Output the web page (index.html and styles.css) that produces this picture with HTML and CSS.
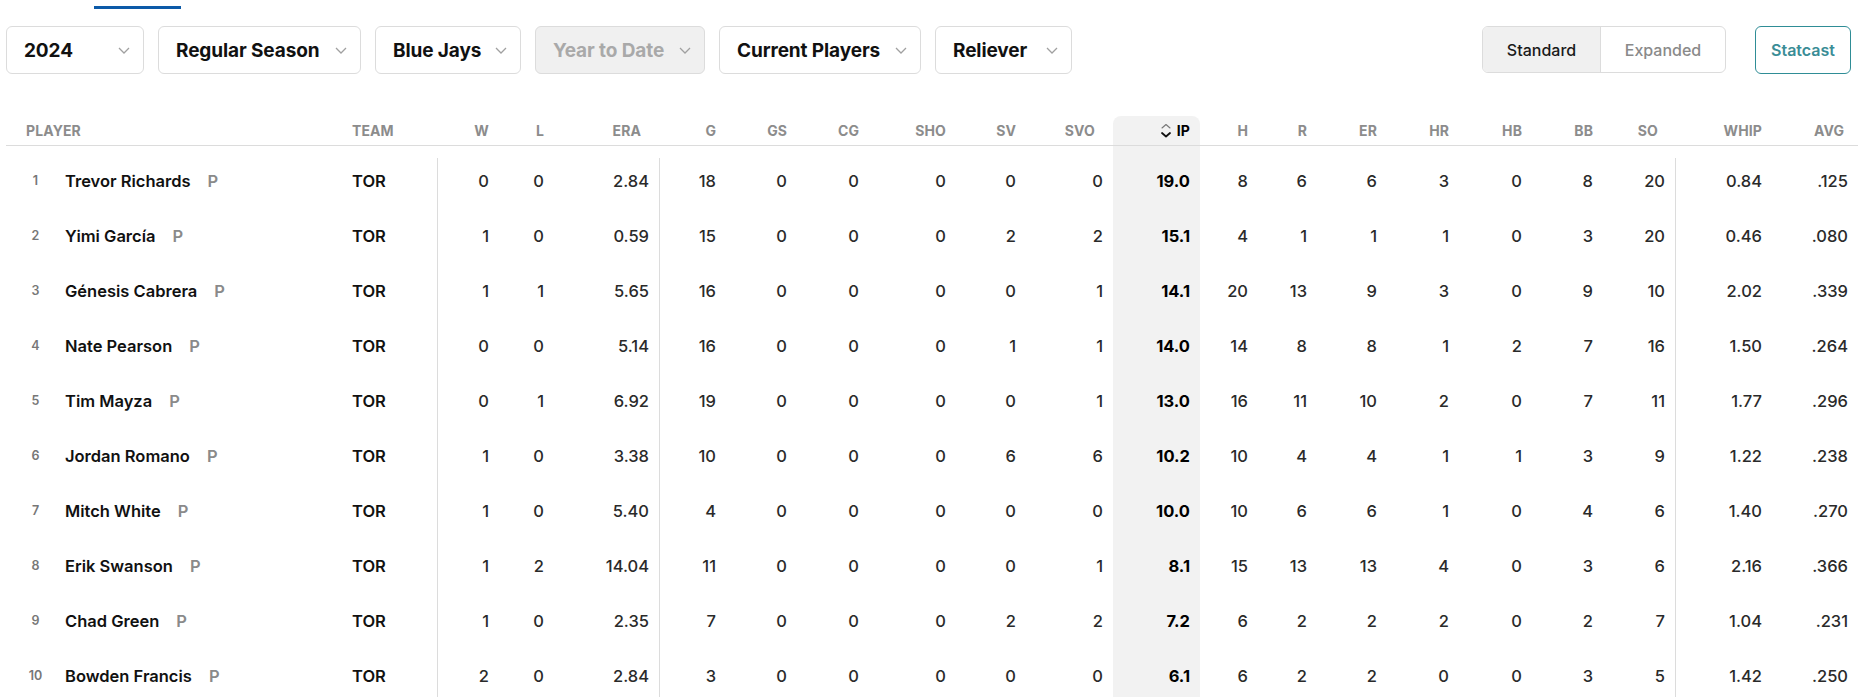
FILE: index.html
```html
<!DOCTYPE html>
<html>
<head>
<meta charset="utf-8">
<link rel="stylesheet" href="styles.css">
</head>
<body>
<div class="page">
  <div class="tabs"><div class="tab-underline"></div></div>
  <div class="filters">
    <div class="dropdowns">
      <div class="dd dd-year"><span>2024</span><svg class="chev" viewBox="0 0 12 7"><path d="M1 1 L6 6 L11 1"/></svg></div>
      <div class="dd dd-season"><span>Regular Season</span><svg class="chev" viewBox="0 0 12 7"><path d="M1 1 L6 6 L11 1"/></svg></div>
      <div class="dd dd-team"><span>Blue Jays</span><svg class="chev" viewBox="0 0 12 7"><path d="M1 1 L6 6 L11 1"/></svg></div>
      <div class="dd dd-range disabled"><span>Year to Date</span><svg class="chev" viewBox="0 0 12 7"><path d="M1 1 L6 6 L11 1"/></svg></div>
      <div class="dd dd-players"><span>Current Players</span><svg class="chev" viewBox="0 0 12 7"><path d="M1 1 L6 6 L11 1"/></svg></div>
      <div class="dd dd-role"><span>Reliever</span><svg class="chev" viewBox="0 0 12 7"><path d="M1 1 L6 6 L11 1"/></svg></div>
    </div>
    <div class="views">
      <div class="toggle">
        <div class="seg seg-standard active">Standard</div>
        <div class="seg seg-expanded">Expanded</div>
      </div>
      <div class="statcast">Statcast</div>
    </div>
  </div>

  <div class="table">
    <div class="thead grid">
      <div class="th th-player">Player</div>
      <div class="th th-team">Team</div>
      <div class="th">W</div>
      <div class="th">L</div>
      <div class="th pr18">ERA</div>
      <div class="th">G</div>
      <div class="th">GS</div>
      <div class="th">CG</div>
      <div class="th">SHO</div>
      <div class="th">SV</div>
      <div class="th pr18">SVO</div>
      <div class="th th-sorted"><svg class="sort" viewBox="0 0 12 15"><path class="up" d="M2 5 L6 1.5 L10 5"/><path class="down" d="M2 10 L6 13.5 L10 10"/></svg><span>IP</span></div>
      <div class="th">H</div>
      <div class="th">R</div>
      <div class="th">ER</div>
      <div class="th">HR</div>
      <div class="th">HB</div>
      <div class="th">BB</div>
      <div class="th pr17">SO</div>
      <div class="th">WHIP</div>
      <div class="th pr14">AVG</div>
    </div>

    <div class="tbody">
      <div class="row grid first">
        <div class="td td-player"><span class="rank">1</span><span class="name">Trevor Richards</span><span class="pos">P</span></div>
        <div class="td td-team">TOR</div>
        <div class="td div">0</div><div class="td">0</div><div class="td pr18">2.84</div>
        <div class="td div">18</div><div class="td">0</div><div class="td">0</div><div class="td">0</div><div class="td">0</div><div class="td pr18">0</div>
        <div class="td ip">19.0</div>
        <div class="td">8</div><div class="td">6</div><div class="td">6</div><div class="td">3</div><div class="td">0</div><div class="td">8</div><div class="td pr17">20</div>
        <div class="td div">0.84</div><div class="td pr14">.125</div>
      </div>
      <div class="row grid">
        <div class="td td-player"><span class="rank">2</span><span class="name">Yimi García</span><span class="pos">P</span></div>
        <div class="td td-team">TOR</div>
        <div class="td div">1</div><div class="td">0</div><div class="td pr18">0.59</div>
        <div class="td div">15</div><div class="td">0</div><div class="td">0</div><div class="td">0</div><div class="td">2</div><div class="td pr18">2</div>
        <div class="td ip">15.1</div>
        <div class="td">4</div><div class="td">1</div><div class="td">1</div><div class="td">1</div><div class="td">0</div><div class="td">3</div><div class="td pr17">20</div>
        <div class="td div">0.46</div><div class="td pr14">.080</div>
      </div>
      <div class="row grid">
        <div class="td td-player"><span class="rank">3</span><span class="name">Génesis Cabrera</span><span class="pos">P</span></div>
        <div class="td td-team">TOR</div>
        <div class="td div">1</div><div class="td">1</div><div class="td pr18">5.65</div>
        <div class="td div">16</div><div class="td">0</div><div class="td">0</div><div class="td">0</div><div class="td">0</div><div class="td pr18">1</div>
        <div class="td ip">14.1</div>
        <div class="td">20</div><div class="td">13</div><div class="td">9</div><div class="td">3</div><div class="td">0</div><div class="td">9</div><div class="td pr17">10</div>
        <div class="td div">2.02</div><div class="td pr14">.339</div>
      </div>
      <div class="row grid">
        <div class="td td-player"><span class="rank">4</span><span class="name">Nate Pearson</span><span class="pos">P</span></div>
        <div class="td td-team">TOR</div>
        <div class="td div">0</div><div class="td">0</div><div class="td pr18">5.14</div>
        <div class="td div">16</div><div class="td">0</div><div class="td">0</div><div class="td">0</div><div class="td">1</div><div class="td pr18">1</div>
        <div class="td ip">14.0</div>
        <div class="td">14</div><div class="td">8</div><div class="td">8</div><div class="td">1</div><div class="td">2</div><div class="td">7</div><div class="td pr17">16</div>
        <div class="td div">1.50</div><div class="td pr14">.264</div>
      </div>
      <div class="row grid">
        <div class="td td-player"><span class="rank">5</span><span class="name">Tim Mayza</span><span class="pos">P</span></div>
        <div class="td td-team">TOR</div>
        <div class="td div">0</div><div class="td">1</div><div class="td pr18">6.92</div>
        <div class="td div">19</div><div class="td">0</div><div class="td">0</div><div class="td">0</div><div class="td">0</div><div class="td pr18">1</div>
        <div class="td ip">13.0</div>
        <div class="td">16</div><div class="td">11</div><div class="td">10</div><div class="td">2</div><div class="td">0</div><div class="td">7</div><div class="td pr17">11</div>
        <div class="td div">1.77</div><div class="td pr14">.296</div>
      </div>
      <div class="row grid">
        <div class="td td-player"><span class="rank">6</span><span class="name">Jordan Romano</span><span class="pos">P</span></div>
        <div class="td td-team">TOR</div>
        <div class="td div">1</div><div class="td">0</div><div class="td pr18">3.38</div>
        <div class="td div">10</div><div class="td">0</div><div class="td">0</div><div class="td">0</div><div class="td">6</div><div class="td pr18">6</div>
        <div class="td ip">10.2</div>
        <div class="td">10</div><div class="td">4</div><div class="td">4</div><div class="td">1</div><div class="td">1</div><div class="td">3</div><div class="td pr17">9</div>
        <div class="td div">1.22</div><div class="td pr14">.238</div>
      </div>
      <div class="row grid">
        <div class="td td-player"><span class="rank">7</span><span class="name">Mitch White</span><span class="pos">P</span></div>
        <div class="td td-team">TOR</div>
        <div class="td div">1</div><div class="td">0</div><div class="td pr18">5.40</div>
        <div class="td div">4</div><div class="td">0</div><div class="td">0</div><div class="td">0</div><div class="td">0</div><div class="td pr18">0</div>
        <div class="td ip">10.0</div>
        <div class="td">10</div><div class="td">6</div><div class="td">6</div><div class="td">1</div><div class="td">0</div><div class="td">4</div><div class="td pr17">6</div>
        <div class="td div">1.40</div><div class="td pr14">.270</div>
      </div>
      <div class="row grid">
        <div class="td td-player"><span class="rank">8</span><span class="name">Erik Swanson</span><span class="pos">P</span></div>
        <div class="td td-team">TOR</div>
        <div class="td div">1</div><div class="td">2</div><div class="td pr18">14.04</div>
        <div class="td div">11</div><div class="td">0</div><div class="td">0</div><div class="td">0</div><div class="td">0</div><div class="td pr18">1</div>
        <div class="td ip">8.1</div>
        <div class="td">15</div><div class="td">13</div><div class="td">13</div><div class="td">4</div><div class="td">0</div><div class="td">3</div><div class="td pr17">6</div>
        <div class="td div">2.16</div><div class="td pr14">.366</div>
      </div>
      <div class="row grid">
        <div class="td td-player"><span class="rank">9</span><span class="name">Chad Green</span><span class="pos">P</span></div>
        <div class="td td-team">TOR</div>
        <div class="td div">1</div><div class="td">0</div><div class="td pr18">2.35</div>
        <div class="td div">7</div><div class="td">0</div><div class="td">0</div><div class="td">0</div><div class="td">2</div><div class="td pr18">2</div>
        <div class="td ip">7.2</div>
        <div class="td">6</div><div class="td">2</div><div class="td">2</div><div class="td">2</div><div class="td">0</div><div class="td">2</div><div class="td pr17">7</div>
        <div class="td div">1.04</div><div class="td pr14">.231</div>
      </div>
      <div class="row grid">
        <div class="td td-player"><span class="rank">10</span><span class="name">Bowden Francis</span><span class="pos">P</span></div>
        <div class="td td-team">TOR</div>
        <div class="td div">2</div><div class="td">0</div><div class="td pr18">2.84</div>
        <div class="td div">3</div><div class="td">0</div><div class="td">0</div><div class="td">0</div><div class="td">0</div><div class="td pr18">0</div>
        <div class="td ip">6.1</div>
        <div class="td">6</div><div class="td">2</div><div class="td">2</div><div class="td">0</div><div class="td">0</div><div class="td">3</div><div class="td pr17">5</div>
        <div class="td div">1.42</div><div class="td pr14">.250</div>
      </div>
    </div>
  </div>
</div>
</body>
</html>
```

FILE: styles.css
```css
html, body {
  margin: 0;
  padding: 0;
  background: #fff;
}
body {
  font-family: Inter, "Liberation Sans", Arial, sans-serif;
  color: #1a1a1a;
  overflow: hidden;
  height: 697px;
}
.page {
  padding: 0 6px;
}

/* top tab underline */
.tabs {
  padding-top: 6px;
  padding-left: 88px;
}
.tab-underline {
  width: 87px;
  height: 3px;
  background: #0c5aa8;
}

/* filter bar */
.filters {
  margin-top: 17px;
  display: flex;
  justify-content: space-between;
  align-items: flex-start;
}
.dropdowns {
  display: flex;
  gap: 14px;
}
.dd {
  box-sizing: border-box;
  height: 48px;
  border: 1px solid #dcdcdc;
  border-radius: 6px;
  display: flex;
  align-items: center;
  justify-content: space-between;
  padding: 0 13px 0 17px;
  font-size: 19px;
  font-weight: 700;
  color: #111;
  letter-spacing: -0.1px;
}
.dd-year { width: 138px; }
.dd-season { width: 203px; }
.dd-team { width: 146px; }
.dd-range { width: 170px; }
.dd-players { width: 202px; }
.dd-role { width: 137px; }
.dd.disabled {
  background: #f0f0f0;
  color: #a9a9a9;
}
.chev {
  width: 12px;
  height: 7px;
  flex: none;
}
.chev path {
  fill: none;
  stroke: #a0a0a0;
  stroke-width: 1.3;
}

.views {
  display: flex;
  gap: 29px;
  margin-right: 7px;
}
.toggle {
  box-sizing: border-box;
  height: 47px;
  display: flex;
  border: 1px solid #dcdcdc;
  border-radius: 6px;
  overflow: hidden;
}
.seg {
  display: flex;
  align-items: center;
  justify-content: center;
  font-size: 16px;
  font-weight: 500;
  color: #8a8a8a;
}
.seg-standard { width: 117px; }
.seg-expanded { width: 124px; }
.seg.active {
  background: #f0f0f0;
  color: #1a1a1a;
  border-right: 1px solid #dcdcdc;
}
.statcast {
  box-sizing: border-box;
  width: 96px;
  height: 48px;
  border: 1px solid #2f8d96;
  border-radius: 6px;
  display: flex;
  align-items: center;
  justify-content: center;
  font-size: 16px;
  font-weight: 600;
  color: #3a8d96;
}

/* table */
.table {
  margin-top: 42px;
}
.grid {
  display: grid;
  grid-template-columns: 340px 91px 62px 55px 105px 67px 71px 72px 87px 70px 87px 87px 58px 59px 70px 72px 73px 71px 72px 97px 86px;
}
.thead {
  height: 30px;
  box-sizing: border-box;
  border-bottom: 1px solid #dcdcdc;
}
.th {
  display: flex;
  align-items: center;
  justify-content: flex-end;
  padding-right: 10px;
  padding-bottom: 1px;
  font-size: 14px;
  font-weight: 700;
  color: #8c8c8c;
  text-transform: uppercase;
  letter-spacing: 0.1px;
}
.th-player {
  justify-content: flex-start;
  padding-left: 20px;
}
.th-team {
  justify-content: flex-start;
  padding-left: 6px;
}
.th-sorted {
  background: #f2f2f2;
  border-radius: 8px 8px 0 0;
  color: #000;
  gap: 5px;
}
.sort {
  width: 12px;
  height: 15px;
}
.sort path {
  fill: none;
  stroke-linecap: round;
  stroke-linejoin: round;
}
.sort .up {
  stroke: #777;
  stroke-width: 1.1;
}
.sort .down {
  stroke: #111;
  stroke-width: 1.8;
}
.pr18 { padding-right: 18px; }
.pr17 { padding-right: 17px; }
.pr14 { padding-right: 14px; }

.row {
  height: 55px;
}
.row.first {
  height: 62px;
}
.row.first .td {
  padding-top: 7px;
}
.td {
  box-sizing: border-box;
  display: flex;
  align-items: center;
  justify-content: flex-end;
  padding-right: 10px;
  font-size: 16.5px;
  font-weight: 500;
  color: #2a2a2a;
}
.td.div {
  background: linear-gradient(#dcdcdc, #dcdcdc) no-repeat 0 0 / 1px 100%;
}
.row.first .td.div {
  background-position: 0 12px;
}
.td.ip {
  background: #f2f2f2;
  font-weight: 700;
  color: #000;
}
.td-player {
  justify-content: flex-start;
  padding-right: 0;
}
.rank {
  width: 59px;
  text-align: center;
  font-size: 12.5px;
  font-weight: 600;
  color: #777;
}
.name {
  font-size: 16.5px;
  font-weight: 600;
  color: #111;
}
.pos {
  margin-left: 17px;
  font-size: 16.5px;
  font-weight: 600;
  color: #8a8a8a;
}
.td-team {
  justify-content: flex-start;
  padding-left: 6px;
  font-weight: 600;
  color: #111;
}
```
